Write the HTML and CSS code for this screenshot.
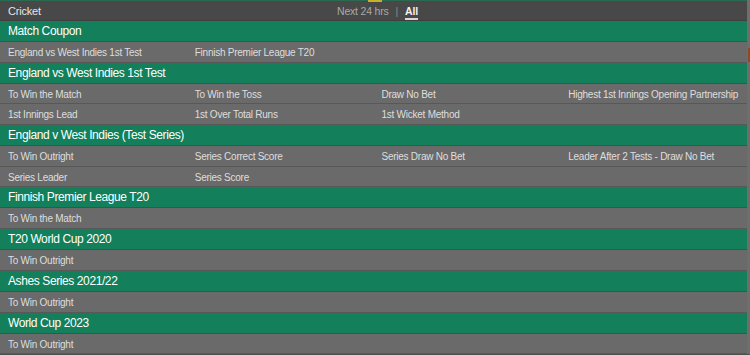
FILE: index.html
```html
<!DOCTYPE html>
<html lang="en">
<head>
<meta charset="UTF-8">
<meta name="viewport" content="width=device-width, initial-scale=1.0">
<title>Cricket</title>
<link rel="stylesheet" href="styles.css">
</head>
<body>
<div class="page">
    <div class="topbar">
        <span class="sport">Cricket</span>
        <div class="filters">
            <span class="filter">Next 24 hrs</span>
            <span class="sep">|</span>
            <span class="filter active">All</span>
        </div>
        <span class="marker"></span>
    </div>

    <div class="section">
        <div class="head">Match Coupon</div>
        <div class="row">
            <span>England vs West Indies 1st Test</span>
            <span>Finnish Premier League T20</span>
            <span></span>
            <span></span>
        </div>
    </div>

    <div class="section">
        <div class="head">England vs West Indies 1st Test</div>
        <div class="row">
            <span>To Win the Match</span>
            <span>To Win the Toss</span>
            <span>Draw No Bet</span>
            <span>Highest 1st Innings Opening Partnership</span>
        </div>
        <div class="row">
            <span>1st Innings Lead</span>
            <span>1st Over Total Runs</span>
            <span>1st Wicket Method</span>
            <span></span>
        </div>
    </div>

    <div class="section">
        <div class="head">England v West Indies (Test Series)</div>
        <div class="row">
            <span>To Win Outright</span>
            <span>Series Correct Score</span>
            <span>Series Draw No Bet</span>
            <span>Leader After 2 Tests - Draw No Bet</span>
        </div>
        <div class="row">
            <span>Series Leader</span>
            <span>Series Score</span>
            <span></span>
            <span></span>
        </div>
    </div>

    <div class="section">
        <div class="head">Finnish Premier League T20</div>
        <div class="row"><span>To Win the Match</span><span></span><span></span><span></span></div>
    </div>

    <div class="section">
        <div class="head">T20 World Cup 2020</div>
        <div class="row"><span>To Win Outright</span><span></span><span></span><span></span></div>
    </div>

    <div class="section">
        <div class="head">Ashes Series 2021/22</div>
        <div class="row"><span>To Win Outright</span><span></span><span></span><span></span></div>
    </div>

    <div class="section">
        <div class="head">World Cup 2023</div>
        <div class="row"><span>To Win Outright</span><span></span><span></span><span></span></div>
    </div>
</div>
<div class="edge"><span class="edge-mark"></span></div>
</body>
</html>
```

FILE: styles.css
```css
body {
    margin: 0;
    padding: 0;
    background-color: #505050;
    font-family: "Liberation Sans", Arial, sans-serif;
    display: flex;
    overflow: hidden;
}
.page {
    width: 747px;
    border-top: 1px solid #2a6a50;
}
.topbar {
    position: relative;
    height: 19px;
    background-color: #484848;
    border-bottom: 1px solid #3f3f3f;
    display: flex;
    align-items: center;
    padding-left: 8px;
}
.sport {
    color: #e6e6e6;
    font-size: 11px;
    letter-spacing: -0.2px;
}
.filters {
    position: absolute;
    left: 337px;
    top: 0;
    height: 19px;
    display: flex;
    align-items: center;
    gap: 7px;
    font-size: 10.5px;
    letter-spacing: -0.2px;
    color: #a8a8a8;
}
.filter.active {
    color: #f2f2f2;
    font-weight: bold;
    border-bottom: 2px solid #d8d8d8;
    padding-top: 3px;
    line-height: 13px;
}
.sep {
    color: #8a8a8a;
}
.marker {
    position: absolute;
    left: 368px;
    top: -1px;
    width: 14px;
    height: 2px;
    background-color: #c8b02a;
}
.head {
    height: 20px;
    line-height: 21px;
    overflow: hidden;
    background-color: #137f5b;
    border-bottom: 1px solid #2b5e4a;
    color: #ffffff;
    font-size: 12px;
    letter-spacing: -0.4px;
    padding-left: 8px;
}
.row {
    display: grid;
    grid-template-columns: repeat(4, minmax(0, 1fr));
    height: 19.7px;
    line-height: 22px;
    overflow: hidden;
    background-color: #6a6a6a;
    border-bottom: 1px solid #585858;
    font-size: 10px;
    letter-spacing: -0.25px;
    color: #dedede;
}
.row span {
    padding-left: 8px;
    white-space: nowrap;
}
.edge {
    width: 3px;
    background-color: #6e6e6e;
    position: relative;
}
.edge-mark {
    position: absolute;
    top: 48px;
    left: 1px;
    width: 2px;
    height: 14px;
    background-color: #8a4a2a;
}
```
